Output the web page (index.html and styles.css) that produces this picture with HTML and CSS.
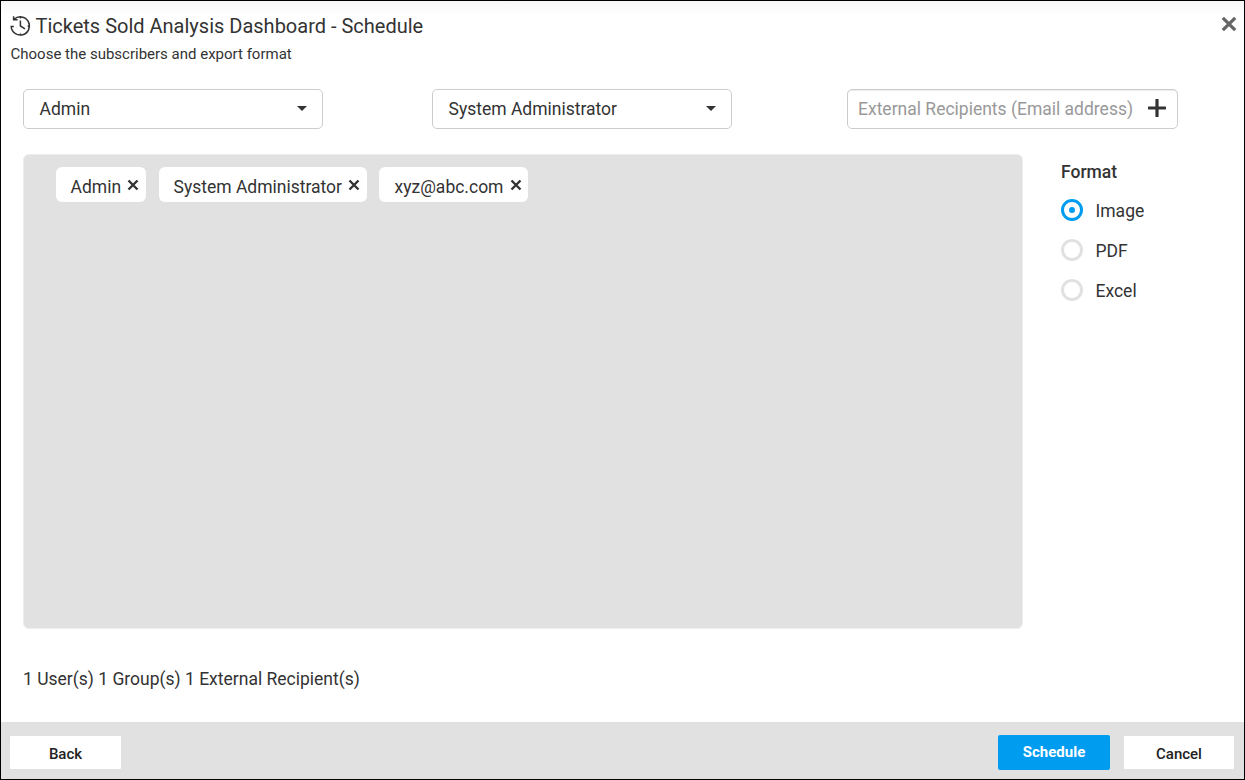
FILE: index.html
```html
<!DOCTYPE html>
<html lang="en">
<head>
<meta charset="utf-8">
<title>Tickets Sold Analysis Dashboard - Schedule</title>
<link rel="stylesheet" href="styles.css">
</head>
<body>
<main class="dialog">
  <header class="header">
    <div class="heading">
      <h1 class="title">
        <svg class="history" viewBox="0 0 22 22"><path d="M4.1 4.3A9.1 9.1 0 1 1 1.2 11.5H3.8M3.6 1.2V4.8H7.6M10.4 5.5V11L15 13.8M10.5 1.8V3.6M10.5 18.4V20.2M17.6 11H19.4"/></svg>
        <span class="title-text">Tickets Sold Analysis Dashboard - Schedule</span>
      </h1>
      <p class="subtitle">Choose the subscribers and export format</p>
    </div>
    <svg class="close" viewBox="0 0 16 16"><path d="M1.8 1.8L14.2 14.2M14.2 1.8L1.8 14.2"/></svg>
  </header>
  <section class="filters">
    <div class="field select"><span class="label">Admin</span><i class="caret"></i></div>
    <div class="field select"><span class="label">System Administrator</span><i class="caret"></i></div>
    <div class="field email"><span class="label">External Recipients (Email address)</span><svg class="plus" viewBox="0 0 18 18"><path d="M9 1V17M1 9H17"/></svg></div>
  </section>
  <section class="content">
    <div class="recipients">
      <div class="chip chip-admin"><span class="label">Admin</span><svg class="remove" viewBox="0 0 12 12"><path d="M1.5 1.5L10.5 10.5M10.5 1.5L1.5 10.5"/></svg></div>
      <div class="chip chip-group"><span class="label">System Administrator</span><svg class="remove" viewBox="0 0 12 12"><path d="M1.5 1.5L10.5 10.5M10.5 1.5L1.5 10.5"/></svg></div>
      <div class="chip chip-mail"><span class="label">xyz@abc.com</span><svg class="remove" viewBox="0 0 12 12"><path d="M1.5 1.5L10.5 10.5M10.5 1.5L1.5 10.5"/></svg></div>
    </div>
    <div class="formats">
      <h2 class="formats-title">Format</h2>
      <div class="option"><i class="radio checked"></i><span class="label">Image</span></div>
      <div class="option"><i class="radio"></i><span class="label">PDF</span></div>
      <div class="option"><i class="radio"></i><span class="label">Excel</span></div>
    </div>
  </section>
  <p class="summary">1 User(s) 1 Group(s) 1 External Recipient(s)</p>
  <footer class="footer">
    <button class="btn back">Back</button>
    <button class="btn primary">Schedule</button>
    <button class="btn cancel">Cancel</button>
  </footer>
</main>
</body>
</html>
```
FILE: styles.css
```css
* { box-sizing: border-box; }
body { margin: 0; font-family: Roboto, sans-serif; font-size: 17.5px; color: #333; }
svg { display: block; flex: none; fill: none; stroke: #333; }
.dialog { display: flex; flex-direction: column; width: 1245px; height: 780px; border: 1px solid #000; background: linear-gradient(#f7f7f7, #fff 14px); }
.header { display: flex; justify-content: space-between; height: 88px; padding: 14px 7px 0 9px; }
.title { display: flex; align-items: center; gap: 3.5px; margin: 0; height: 22px; font-size: 20px; font-weight: 400; white-space: nowrap; }
.history { width: 22px; height: 22px; stroke-width: 1.5; }
.subtitle { margin: 7px 0 0 0.5px; font-size: 15px; line-height: 20px; }
.close { width: 16px; height: 16px; margin-top: 1px; stroke: #666; stroke-width: 3.3; }
.label { padding-top: 2px; }
.filters { display: flex; height: 65px; padding-left: 22px; }
.field { display: flex; align-items: center; justify-content: space-between; height: 40px; padding-bottom: 2px; border: 1px solid #ccc; border-radius: 5px; white-space: nowrap; background: #fff; }
.select { width: 300px; margin-right: 109px; padding-left: 15.5px; padding-right: 15.5px; }
.caret { width: 0; height: 0; border: 5px solid transparent; border-top-color: #333; border-bottom: 0; }
.email { width: 331px; margin-left: 6px; padding-left: 10px; padding-right: 11px; color: #999; box-shadow: inset 0 1px 1px rgba(0,0,0,.075); }
.plus { width: 18px; height: 18px; stroke-width: 3.2; stroke-linecap: round; }
.content { display: flex; height: 475px; padding-left: 22px; }
.recipients { display: flex; align-items: flex-start; width: 1000px; height: 475px; padding: 12px 32px; border: 1px solid #eee; border-radius: 6px; background: #e1e1e1; }
.chip { display: flex; align-items: center; justify-content: space-between; height: 35px; padding: 3px 7px 0 14.5px; border-radius: 6px; background: #fff; white-space: nowrap; }
.chip-admin { width: 90px; margin-right: 13px; }
.chip-group { width: 208px; margin-right: 12px; }
.chip-mail { width: 149px; padding-left: 15.5px; padding-right: 6.5px; }
.remove { width: 12px; height: 12px; margin-top: -3px; stroke-width: 2.4; }
.formats { padding: 7px 0 0 38px; }
.formats-title { margin: 0 0 7px; font-size: 17.5px; font-weight: 500; line-height: 22px; }
.option { display: flex; align-items: center; gap: 12.5px; height: 40px; }
.radio { display: grid; place-items: center; width: 22px; height: 22px; margin-top: -1px; border: 3px solid #e1e1e1; border-radius: 50%; }
.checked { border-color: #009cf0; }
.checked::after { content: ""; width: 6px; height: 6px; border-radius: 50%; background: #009cf0; }
.summary { margin: 38px 0 0 22px; line-height: 24px; }
.footer { display: flex; align-items: center; height: 57px; margin-top: auto; padding: 3px 10px 0 9px; background: #e1e1e1; }
.btn { width: 111px; height: 33px; padding: 3px 0 0; border: 0; border-radius: 1px; background: #fff; color: #222; font: 500 15px Roboto, sans-serif; }
.back { margin-right: auto; }
.cancel { width: 110px; }
.primary { width: 112px; height: 35px; margin-right: 14px; padding: 0; border-radius: 2px; background: #009cf0; color: #fff; font-weight: 700; }
```
